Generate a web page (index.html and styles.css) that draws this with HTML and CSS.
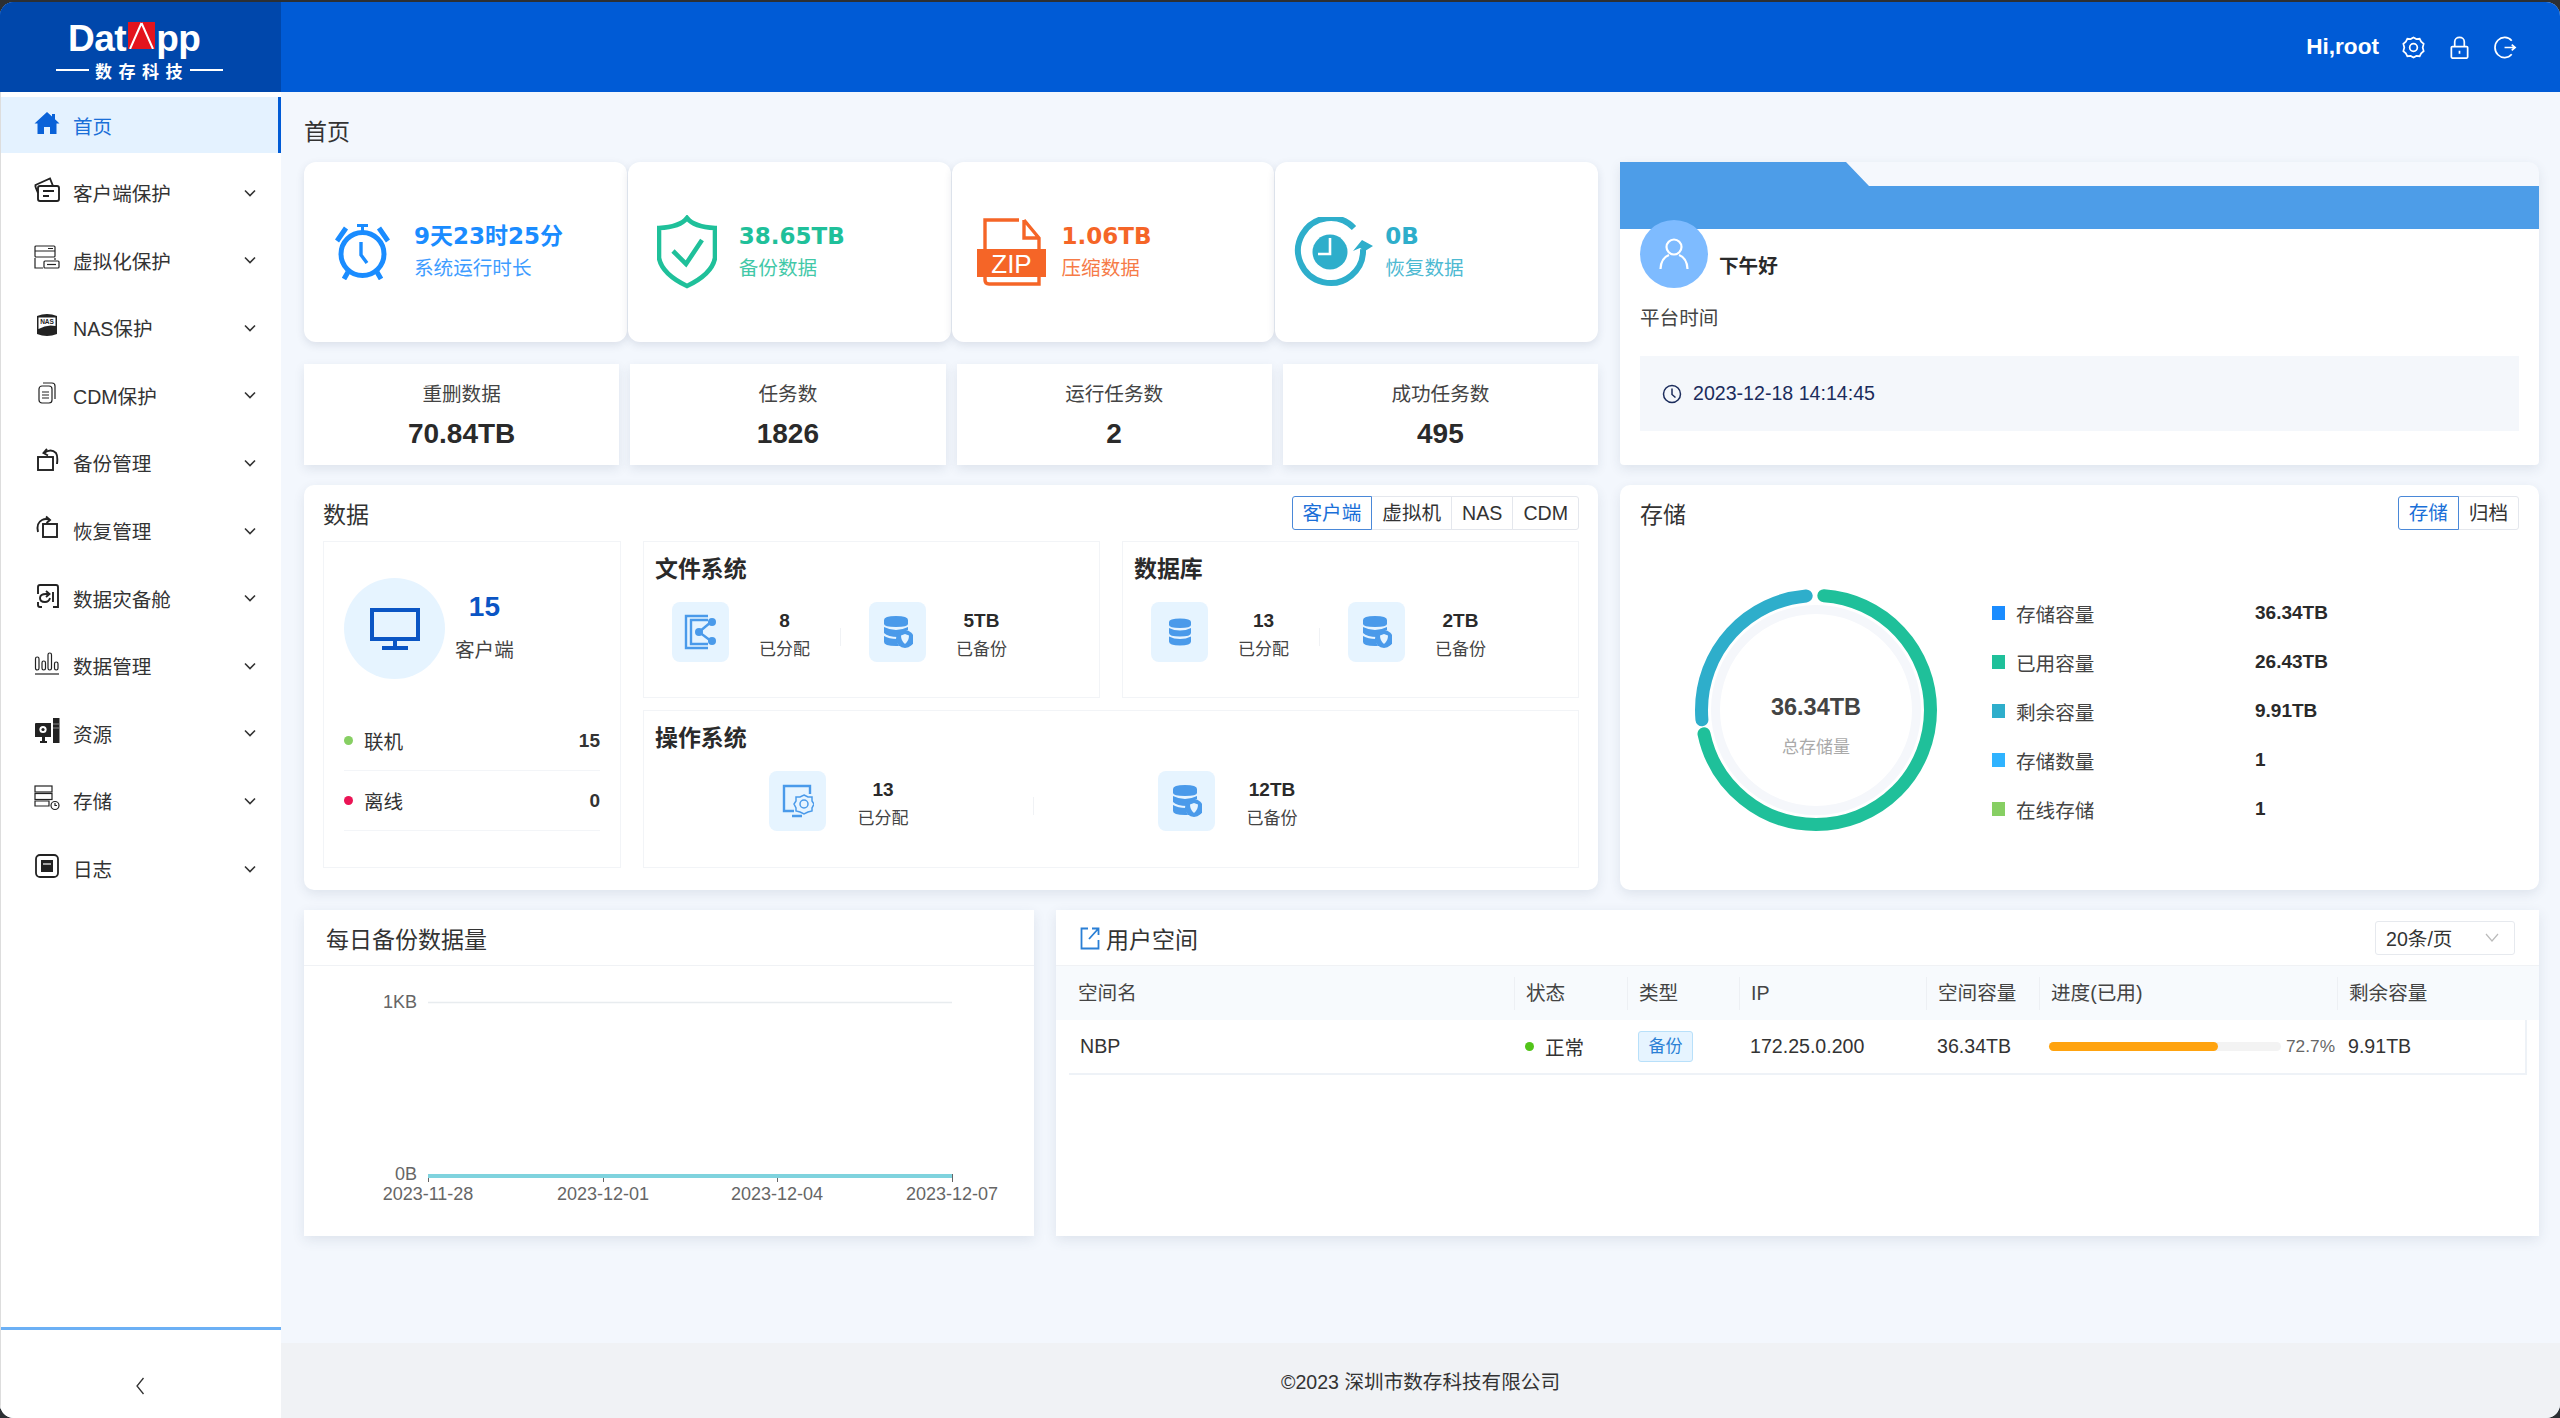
FILE: index.html
```html
<!DOCTYPE html>
<html lang="zh">

<head>
    <meta charset="utf-8">
    <title>DatApp</title>
    <meta name="viewport" content="width=device-width, initial-scale=1.0" />
    <link rel="stylesheet" href="styles.css">
</head>

<body>
    <div class="app">
        <!-- Top bar -->
        <header class="topbar">
            <div class="logo">
                <div class="logo-word">
                    <span>Dat</span>
                    <svg class="logo-a" viewBox="0 0 27 27">
                        <rect width="27" height="27" fill="#e3141d" />
                        <path d="M13.5 1 L2 27 M13.5 1 L25 27" stroke="#fff" stroke-width="2" fill="none" />
                    </svg>
                    <span>pp</span>
                </div>
                <div class="logo-sub"><i></i><span>数存科技</span><i></i></div>
            </div>
            <div class="topbar-right">
                <span class="hi">Hi,root</span>
                <svg class="top-icon" viewBox="0 0 24 24">
                    <path d="M12 1.5 L15 3.2 L18.4 2.9 L20 6 L22.6 8.2 L21.6 12 L22.6 15.8 L20 18 L18.4 21.1 L15 20.8 L12 22.5 L9 20.8 L5.6 21.1 L4 18 L1.4 15.8 L2.4 12 L1.4 8.2 L4 6 L5.6 2.9 L9 3.2 Z" />
                    <circle cx="12" cy="12" r="4" />
                </svg>
                <svg class="top-icon" viewBox="0 0 24 24">
                    <rect x="3.5" y="11" width="17" height="12" rx="1" />
                    <path d="M7 11 V6 a5 4.5 0 0 1 10 0 V11" />
                    <path d="M12 15.5 v3" />
                </svg>
                <svg class="top-icon" viewBox="0 0 24 24">
                    <path d="M18.5 5 A10 10.5 0 1 0 18.5 19" />
                    <path d="M11 12 H22 M18.5 9 L22 12 L18.5 15" />
                </svg>
            </div>
        </header>

        <div class="layout">
            <!-- Sidebar -->
            <aside class="sidebar">
                <nav class="menu">
                    <a class="menu-item active">
                        <svg class="nav-icon" viewBox="0 0 26 26">
                            <path class="blue" d="M13 2 L0.5 13.5 L3.5 13.5 L3.5 24 L10 24 L10 17 L16 17 L16 24 L22.5 24 L22.5 13.5 L25.5 13.5 L21 9.3 L21 4 L18 4 L18 6.6 Z" />
                        </svg>
                        <span>首页</span>
                    </a>
                    <a class="menu-item">
                        <svg class="nav-icon line" viewBox="0 0 26 26">
                            <rect x="4" y="9" width="21" height="15" rx="2" />
                            <path d="M1.5 10 L1.5 8 L16 1.5 L19 9 M4 16 L1.5 10" />
                            <path d="M9 14 H20 M9 19 H15" />
                        </svg>
                        <span>客户端保护</span>
                        <svg class="chev" viewBox="0 0 12 8"><path d="M1 1.5 L6 6.5 L11 1.5" /></svg>
                    </a>
                    <a class="menu-item">
                        <svg class="nav-icon line thin" viewBox="0 0 26 26">
                            <rect x="1" y="1" width="20" height="11" rx="1" />
                            <path d="M1 6 H21 M14 3.5 H19" />
                            <path d="M1 13 V23 H9 M21 13 V15" />
                            <rect x="10" y="16" width="15" height="7" rx="1" />
                            <path d="M13 19.5 H22" />
                        </svg>
                        <span>虚拟化保护</span>
                        <svg class="chev" viewBox="0 0 12 8"><path d="M1 1.5 L6 6.5 L11 1.5" /></svg>
                    </a>
                    <a class="menu-item">
                        <svg class="nav-icon" viewBox="0 0 26 26">
                            <path d="M3 4 Q13 0 23 4 V22 Q13 26 3 22 Z" fill="#222" />
                            <path d="M4.5 5.5 H21.5 V14 Q13 12 4.5 17 Z" fill="#fff" />
                            <text x="13" y="12" class="nas-text">NAS</text>
                        </svg>
                        <span>NAS保护</span>
                        <svg class="chev" viewBox="0 0 12 8"><path d="M1 1.5 L6 6.5 L11 1.5" /></svg>
                    </a>
                    <a class="menu-item">
                        <svg class="nav-icon line thin" viewBox="0 0 26 26">
                            <rect x="5" y="6" width="13" height="17" rx="3" />
                            <path d="M9 3 H18 Q21 3 21 6 V19" />
                            <path d="M8 12 H15 M8 15 H15 M8 18 H15" />
                        </svg>
                        <span>CDM保护</span>
                        <svg class="chev" viewBox="0 0 12 8"><path d="M1 1.5 L6 6.5 L11 1.5" /></svg>
                    </a>
                    <a class="menu-item">
                        <svg class="nav-icon line" viewBox="0 0 26 26">
                            <rect x="4" y="10" width="15" height="13" />
                            <path d="M10 6 Q17 1 22 6 Q24 9 23 17" />
                            <path d="M13 2 L9.5 6 L14 8.5" />
                        </svg>
                        <span>备份管理</span>
                        <svg class="chev" viewBox="0 0 12 8"><path d="M1 1.5 L6 6.5 L11 1.5" /></svg>
                    </a>
                    <a class="menu-item">
                        <svg class="nav-icon line" viewBox="0 0 26 26">
                            <rect x="9" y="9" width="14" height="13" />
                            <path d="M4 17 Q2 8 8 5 Q12 3 16 5" />
                            <path d="M12 1.5 L16 5 L12.5 8" />
                        </svg>
                        <span>恢复管理</span>
                        <svg class="chev" viewBox="0 0 12 8"><path d="M1 1.5 L6 6.5 L11 1.5" /></svg>
                    </a>
                    <a class="menu-item">
                        <svg class="nav-icon line" viewBox="0 0 26 26">
                            <path d="M4 11 V4 Q4 2 6 2 H22 Q24 2 24 4 V24 H19 M4 19 V22 Q4 24 6 24 H8" />
                            <path d="M16 15 Q15 19 11 19 Q6 19 6 15 Q6 11 12 11 H15 M12 8 L15.5 11 L12 14" />
                            <path d="M19 9 V19" />
                        </svg>
                        <span>数据灾备舱</span>
                        <svg class="chev" viewBox="0 0 12 8"><path d="M1 1.5 L6 6.5 L11 1.5" /></svg>
                    </a>
                    <a class="menu-item">
                        <svg class="nav-icon line thin" viewBox="0 0 26 26">
                            <rect x="1.5" y="7" width="3.5" height="13" rx="1.7" />
                            <rect x="8" y="11" width="3.5" height="9" rx="1.7" />
                            <rect x="14" y="3" width="3.5" height="17" rx="1.7" />
                            <rect x="20.5" y="12" width="3.5" height="8" rx="1.7" />
                            <path d="M1 24 H25" />
                        </svg>
                        <span>数据管理</span>
                        <svg class="chev" viewBox="0 0 12 8"><path d="M1 1.5 L6 6.5 L11 1.5" /></svg>
                    </a>
                    <a class="menu-item">
                        <svg class="nav-icon" viewBox="0 0 26 26">
                            <path d="M1 6 Q1 5 2 5 H17 V19 H1 Z M6 23 H13 V25 H6 Z M8 19 H11 V23 H8 Z" fill="#222" />
                            <circle cx="9" cy="11.5" r="3.6" fill="#fff" />
                            <circle cx="9" cy="11.5" r="1.6" fill="#222" />
                            <rect x="19" y="0" width="6.5" height="25" fill="#222" />
                            <path d="M19 6 H25.5 M19 10 H25.5" stroke="#888" stroke-width="1" />
                        </svg>
                        <span>资源</span>
                        <svg class="chev" viewBox="0 0 12 8"><path d="M1 1.5 L6 6.5 L11 1.5" /></svg>
                    </a>
                    <a class="menu-item">
                        <svg class="nav-icon line thin" viewBox="0 0 26 26">
                            <rect x="1" y="1" width="17" height="6" />
                            <rect x="1" y="8.5" width="17" height="6" />
                            <path d="M1 16 H15 V21 H1 Z" />
                            <circle cx="21" cy="20.5" r="4" />
                            <path d="M21 18 V20.5 H23" />
                        </svg>
                        <span>存储</span>
                        <svg class="chev" viewBox="0 0 12 8"><path d="M1 1.5 L6 6.5 L11 1.5" /></svg>
                    </a>
                    <a class="menu-item">
                        <svg class="nav-icon" viewBox="0 0 26 26">
                            <rect x="2" y="2" width="22" height="22" rx="4" fill="none" stroke="#222" stroke-width="1.8" />
                            <rect x="7" y="7" width="12" height="12" fill="#222" />
                            <path d="M9 11 H17" stroke="#fff" stroke-width="1.2" />
                        </svg>
                        <span>日志</span>
                        <svg class="chev" viewBox="0 0 12 8"><path d="M1 1.5 L6 6.5 L11 1.5" /></svg>
                    </a>
                </nav>
                <div class="collapse">
                    <svg viewBox="0 0 10 18"><path d="M8.5 1 L2 9 L8.5 17" /></svg>
                </div>
            </aside>

            <main class="main">
                <div class="content">
                    <h1 class="crumb">首页</h1>

                    <!-- First row -->
                    <div class="row">
                        <div class="top-left">
                            <div class="kpi-grid">
                                <div class="kpi kpi-blue">
                                    <svg class="kpi-icon" width="55" height="56" viewBox="0 0 55 56">
                                        <circle cx="27.5" cy="30" r="21.5" stroke-width="5" />
                                        <path stroke-width="5" d="M2 17 L11 4 M53 17 L44 4 M9 55 L13 48 M46 55 L42 48" />
                                        <path stroke-width="3" d="M27.5 0.5 V8 M22 1.5 H33" />
                                        <path stroke-width="3.4" d="M26 18 V31 L32 39" />
                                    </svg>
                                    <div>
                                        <div class="kpi-value">9天23时25分</div>
                                        <div class="kpi-label">系统运行时长</div>
                                    </div>
                                </div>
                                <div class="kpi kpi-green">
                                    <svg class="kpi-icon" width="60" height="74" viewBox="0 0 60 74">
                                        <path stroke-width="4.6" d="M30 3 Q37 12 58 13 V43 Q55 59 30 71 Q5 59 2 43 V13 Q23 12 30 3 Z" />
                                        <path stroke-width="4.6" d="M16 36 L29 49 L45 25" />
                                    </svg>
                                    <div>
                                        <div class="kpi-value">38.65TB</div>
                                        <div class="kpi-label">备份数据</div>
                                    </div>
                                </div>
                                <div class="kpi kpi-orange">
                                    <svg class="kpi-icon" width="69" height="68" viewBox="0 0 69 68">
                                        <path stroke-width="3.4" d="M8 34 V2 H42 M47 2 L62 20 V34 M47 2 V20 H62 M8 56 V62 Q8 66 12 66 H62 V56" />
                                        <rect x="0" y="31" width="69" height="28" class="zip-band" />
                                        <text x="34.500" y="54.500" class="zip-text">ZIP</text>
                                    </svg>
                                    <div>
                                        <div class="kpi-value">1.06TB</div>
                                        <div class="kpi-label">压缩数据</div>
                                    </div>
                                </div>
                                <div class="kpi kpi-cyan">
                                    <svg class="kpi-icon" width="79" height="71" viewBox="0 0 79 71">
                                        <path stroke-width="6" d="M60 11 A32.500 32.500 0 1 0 69 32" />
                                        <path class="fill" d="M79 29 L68 23 L59 34 L66 31 L71 34 Z" />
                                        <circle class="fill" cx="36" cy="35" r="17.500" />
                                        <path d="M36 21 V37 H24" stroke="#fff" stroke-width="2.600" />
                                    </svg>
                                    <div>
                                        <div class="kpi-value">0B</div>
                                        <div class="kpi-label">恢复数据</div>
                                    </div>
                                </div>
                            </div>
                            <div class="stat-grid">
                                <div class="stat"><div class="stat-label">重删数据</div><div class="stat-value">70.84TB</div></div>
                                <div class="stat"><div class="stat-label">任务数</div><div class="stat-value">1826</div></div>
                                <div class="stat"><div class="stat-label">运行任务数</div><div class="stat-value">2</div></div>
                                <div class="stat"><div class="stat-label">成功任务数</div><div class="stat-value">495</div></div>
                            </div>
                        </div>

                        <div class="card welcome">
                            <div class="banner"></div>
                            <div class="greet">
                                <div class="avatar">
                                    <svg viewBox="0 0 30 34" width="30" height="34">
                                        <circle cx="15" cy="10" r="7.500" />
                                        <path d="M1.500 32 Q2 21 10 18 M28.500 32 Q28 21 20 18" />
                                    </svg>
                                </div>
                                <span class="greet-text">下午好</span>
                            </div>
                            <div class="platform">平台时间</div>
                            <div class="time-box">
                                <svg viewBox="0 0 20 20" width="20" height="20">
                                    <circle cx="10" cy="10" r="8.500" />
                                    <path d="M10 4.500 V10.500 L13.500 13.500" />
                                </svg>
                                <span>2023-12-18 14:14:45</span>
                            </div>
                        </div>
                    </div>

                    <!-- Second row -->
                    <div class="row row-mid">
                        <section class="card data-card">
                            <div class="card-head">
                                <h2>数据</h2>
                                <div class="tabs">
                                    <span class="tab on">客户端</span>
                                    <span class="tab">虚拟机</span>
                                    <span class="tab">NAS</span>
                                    <span class="tab">CDM</span>
                                </div>
                            </div>
                            <div class="data-body">
                                <div class="panel client-panel">
                                    <div class="client-top">
                                        <div class="client-circle">
                                            <svg viewBox="0 0 50 42" width="50" height="42">
                                                <rect x="2" y="2" width="46" height="29" />
                                                <path d="M25 31 V40 M12 40 H38" />
                                            </svg>
                                        </div>
                                        <div class="client-count">
                                            <div class="count-num">15</div>
                                            <div class="count-label">客户端</div>
                                        </div>
                                    </div>
                                    <div class="client-row"><i class="dot dot-on"></i><span>联机</span><b>15</b></div>
                                    <div class="client-row"><i class="dot dot-off"></i><span>离线</span><b>0</b></div>
                                </div>

                                <div class="panel-grid">
                                    <div class="panel">
                                        <h3>文件系统</h3>
                                        <div class="items">
                                            <div class="tile">
                                                <svg class="tile-icon" width="34" height="36" viewBox="0 0 34 36">
                                                    <path class="tl" d="M24 2 H2 V34 H24 M24 6 H7 V30 H24" />
                                                    <path class="tl" d="M27 8 L15 18 L27 27" />
                                                    <circle class="tf" cx="28" cy="8" r="4" />
                                                    <circle class="tf" cx="15" cy="18" r="4" />
                                                    <circle class="tf" cx="28" cy="27" r="4" />
                                                </svg>
                                            </div>
                                            <div class="metric"><b>8</b><span>已分配</span></div>
                                            <i class="split"></i>
                                            <div class="tile">
                                                <svg class="tile-icon" width="30" height="34" viewBox="0 0 30 34">
                                                    <path class="tf" d="M1 5 Q1 1 13 1 Q25 1 25 5 V9 Q25 12 13 12 Q1 12 1 9 Z M1 12 Q7 15 13 15 Q19 15 25 12 V15 Q16 18 15 22 Q5 22 1 18 Z M1 21 Q6 24 14 24 Q14 28 16 31 H13 Q1 31 1 27 Z" />
                                                    <circle class="tf" cx="22" cy="24" r="9" />
                                                    <path d="M22 19 L26 20.500 Q26 26 22 29 Q18 26 18 20.500 Z" fill="#e6f4ff" />
                                                </svg>
                                            </div>
                                            <div class="metric"><b>5TB</b><span>已备份</span></div>
                                        </div>
                                    </div>
                                    <div class="panel">
                                        <h3>数据库</h3>
                                        <div class="items">
                                            <div class="tile">
                                                <svg class="tile-icon" width="24" height="28" viewBox="0 0 24 28">
                                                    <path class="tf" d="M1 4 Q1 0.500 12 0.500 Q23 0.500 23 4 V7 Q23 10 12 10 Q1 10 1 7 Z M1 10 Q6 12.500 12 12.500 Q18 12.500 23 10 V15 Q23 18.500 12 18.500 Q1 18.500 1 15 Z M1 18.500 Q6 21 12 21 Q18 21 23 18.500 V23.500 Q23 27.500 12 27.500 Q1 27.500 1 23.500 Z" />
                                                </svg>
                                            </div>
                                            <div class="metric"><b>13</b><span>已分配</span></div>
                                            <i class="split"></i>
                                            <div class="tile">
                                                <svg class="tile-icon" width="30" height="34" viewBox="0 0 30 34">
                                                    <path class="tf" d="M1 5 Q1 1 13 1 Q25 1 25 5 V9 Q25 12 13 12 Q1 12 1 9 Z M1 12 Q7 15 13 15 Q19 15 25 12 V15 Q16 18 15 22 Q5 22 1 18 Z M1 21 Q6 24 14 24 Q14 28 16 31 H13 Q1 31 1 27 Z" />
                                                    <circle class="tf" cx="22" cy="24" r="9" />
                                                    <path d="M22 19 L26 20.500 Q26 26 22 29 Q18 26 18 20.500 Z" fill="#e6f4ff" />
                                                </svg>
                                            </div>
                                            <div class="metric"><b>2TB</b><span>已备份</span></div>
                                        </div>
                                    </div>
                                    <div class="panel panel-wide">
                                        <h3>操作系统</h3>
                                        <div class="items items-os">
                                            <div class="tile">
                                                <svg class="tile-icon" width="32" height="34" viewBox="0 0 32 34">
                                                    <path class="tl" d="M28 10 V2 H2 V27 H12 M10 32 H20" />
                                                    <path class="tl thin-line" d="M22 11 L26 13 L30 13 L30 17 L32 20 L30 24 L30 27 L26 28 L22 30 L18 28 L14 27 L14 24 L12 20 L14 17 L14 13 L18 13 Z" />
                                                    <circle class="tl thin-line" cx="22" cy="20" r="4" />
                                                </svg>
                                            </div>
                                            <div class="metric"><b>13</b><span>已分配</span></div>
                                            <i class="split"></i>
                                            <div class="tile">
                                                <svg class="tile-icon" width="30" height="34" viewBox="0 0 30 34">
                                                    <path class="tf" d="M1 5 Q1 1 13 1 Q25 1 25 5 V9 Q25 12 13 12 Q1 12 1 9 Z M1 12 Q7 15 13 15 Q19 15 25 12 V15 Q16 18 15 22 Q5 22 1 18 Z M1 21 Q6 24 14 24 Q14 28 16 31 H13 Q1 31 1 27 Z" />
                                                    <circle class="tf" cx="22" cy="24" r="9" />
                                                    <path d="M22 19 L26 20.500 Q26 26 22 29 Q18 26 18 20.500 Z" fill="#e6f4ff" />
                                                </svg>
                                            </div>
                                            <div class="metric"><b>12TB</b><span>已备份</span></div>
                                        </div>
                                    </div>
                                </div>
                            </div>
                        </section>

                        <section class="card storage-card">
                            <div class="card-head">
                                <h2>存储</h2>
                                <div class="tabs">
                                    <span class="tab on">存储</span>
                                    <span class="tab">归档</span>
                                </div>
                            </div>
                            <div class="storage-body">
                                <div class="ring">
                                    <svg viewBox="0 0 242 242" width="242" height="242">
                                        <circle class="ring-bg" cx="121" cy="121" r="100.500" />
                                        <circle class="ring-arc ring-used" cx="121" cy="121" r="114.500" pathLength="360" />
                                        <circle class="ring-arc ring-free" cx="121" cy="121" r="114.500" pathLength="360" />
                                    </svg>
                                    <div class="ring-text">
                                        <div class="ring-value">36.34TB</div>
                                        <div class="ring-label">总存储量</div>
                                    </div>
                                </div>
                                <ul class="legend">
                                    <li><i class="sq sq-blue"></i><span>存储容量</span><b>36.34TB</b></li>
                                    <li><i class="sq sq-green"></i><span>已用容量</span><b>26.43TB</b></li>
                                    <li><i class="sq sq-cyan"></i><span>剩余容量</span><b>9.91TB</b></li>
                                    <li><i class="sq sq-sky"></i><span>存储数量</span><b>1</b></li>
                                    <li><i class="sq sq-lime"></i><span>在线存储</span><b>1</b></li>
                                </ul>
                            </div>
                        </section>
                    </div>

                    <!-- Third row -->
                    <div class="row row-bottom">
                        <section class="card flat">
                            <div class="flat-head"><h2>每日备份数据量</h2></div>
                            <svg class="chart" viewBox="0 0 730 270" width="730" height="270">
                                <path class="grid-line" d="M124 36.500 H648" />
                                <text class="axis-y" x="113" y="42">1KB</text>
                                <text class="axis-y" x="113" y="214">0B</text>
                                <path class="tick" d="M124.500 208 V216 M299.500 210 V216 M473.500 210 V216 M648.500 208 V216" />
                                <path class="series" d="M124 210 H648" />
                                <text class="axis-x" x="124" y="234">2023-11-28</text>
                                <text class="axis-x" x="299" y="234">2023-12-01</text>
                                <text class="axis-x" x="473" y="234">2023-12-04</text>
                                <text class="axis-x" x="648" y="234">2023-12-07</text>
                            </svg>
                        </section>

                        <section class="card flat">
                            <div class="flat-head space-head">
                                <svg class="space-icon" viewBox="0 0 20 24" width="20" height="24">
                                    <path d="M8 2.500 H1.500 V22.500 H18.500 V14" />
                                    <path d="M9 13 L18 3 M12 2.500 H18.500 V9" />
                                </svg>
                                <h2>用户空间</h2>
                                <div class="select">
                                    <span>20条/页</span>
                                    <svg viewBox="0 0 14 9" width="14" height="9"><path d="M1 1 L7 8 L13 1" /></svg>
                                </div>
                            </div>
                            <div class="table-wrap">
                                <table class="space-table">
                                    <colgroup>
                                        <col class="c1"><col class="c2"><col class="c3"><col class="c4"><col class="c5"><col class="c6"><col class="c7">
                                    </colgroup>
                                    <thead>
                                        <tr>
                                            <th><div class="no-line">空间名</div></th>
                                            <th><div>状态</div></th>
                                            <th><div>类型</div></th>
                                            <th><div>IP</div></th>
                                            <th><div>空间容量</div></th>
                                            <th><div>进度(已用)</div></th>
                                            <th><div>剩余容量</div></th>
                                        </tr>
                                    </thead>
                                    <tbody>
                                        <tr>
                                            <td>NBP</td>
                                            <td><span class="state"><i></i>正常</span></td>
                                            <td><span class="tag">备份</span></td>
                                            <td>172.25.0.200</td>
                                            <td>36.34TB</td>
                                            <td>
                                                <div class="progress">
                                                    <div class="track"><div class="fill-bar" style="width:72.7%"></div></div>
                                                    <span>72.7%</span>
                                                </div>
                                            </td>
                                            <td>9.91TB</td>
                                        </tr>
                                    </tbody>
                                </table>
                            </div>
                        </section>
                    </div>
                </div>
                <footer class="footer">©2023 深圳市数存科技有限公司</footer>
            </main>
        </div>
    </div>
</body>

</html>
```

FILE: styles.css
```css
* {
    box-sizing: border-box;
}

html,
body {
    margin: 0;
    height: 100%;
}

body {
    padding-top: 2px;
    background: #2c2f33;
    font-family: "Liberation Sans", "Noto Sans CJK SC", sans-serif;
    font-size: 19.6px;
    color: #333;
    overflow: hidden;
}

h1,
h2,
h3,
ul {
    margin: 0;
    padding: 0;
    font-weight: normal;
}

.app {
    height: 1416px;
    display: flex;
    flex-direction: column;
    border-radius: 14px;
    overflow: hidden;
    background: #f3f7fd;
}

/* top bar */
.topbar {
    height: 90px;
    flex: none;
    display: flex;
    background: #005bd6;
}

.logo {
    width: 281px;
    background: #0047ab;
    padding-top: 20px;
    color: #fff;
}

.logo-word {
    display: flex;
    align-items: flex-start;
    padding-left: 68px;
    height: 34px;
    font-size: 37px;
    line-height: 34px;
    font-weight: bold;
    letter-spacing: -0.5px;
}

.logo-a {
    width: 27px;
    height: 27px;
    margin: 0 1px 0 2px;
}

.logo-sub {
    display: flex;
    align-items: center;
    justify-content: center;
    margin-top: 2px;
    padding-right: 2px;
    height: 24px;
    font-size: 17px;
    font-weight: bold;
}

.logo-sub span {
    letter-spacing: 6.5px;
    margin: 0 1px 0 6px;
}

.logo-sub i {
    width: 33px;
    height: 2px;
    background: #fff;
}

.topbar-right {
    margin-left: auto;
    display: flex;
    align-items: center;
    padding: 0 43px 0 0;
    color: #fff;
}

.hi {
    font-size: 22.6px;
    font-weight: bold;
    margin-right: 23px;
}

.top-icon {
    width: 23px;
    height: 23px;
    margin-right: 23px;
    fill: none;
    stroke: #fff;
    stroke-width: 1.8;
}

.top-icon:last-child {
    margin-right: 0;
}

/* sidebar */
.layout {
    flex: 1;
    display: flex;
    min-height: 0;
}

.sidebar {
    width: 281px;
    flex: none;
    display: flex;
    flex-direction: column;
    padding-top: 5px;
    background: #fff;
    border-left: 1px solid #ddd;
}

.menu-item {
    display: flex;
    align-items: center;
    height: 56px;
    margin-bottom: 11.6px;
    padding: 0 25px 0 33px;
}

.menu-item span {
    margin-left: 13px;
}

.menu-item.active {
    background: #e4f2ff;
    border-right: 3px solid #005bd6;
    color: #1a6fd8;
}

.nav-icon {
    width: 26px;
    height: 26px;
    flex: none;
    margin-top: -5px;
}

.nav-icon .blue {
    fill: #0a62d8;
}

.nav-icon.line {
    fill: none;
    stroke: #222;
    stroke-width: 1.9;
}

.nav-icon.thin {
    stroke-width: 1.2;
}

.nas-text {
    font-size: 6.5px;
    font-weight: bold;
    text-anchor: middle;
    fill: #222;
}

.chev {
    width: 12px;
    height: 8px;
    margin-left: auto;
    fill: none;
    stroke: #333;
    stroke-width: 1.6;
}

.collapse {
    margin-top: auto;
    height: 91px;
    border-top: 3px solid #6cb0f5;
    display: flex;
    align-items: center;
    justify-content: center;
    padding: 24px 2px 0 0;
}

.collapse svg {
    width: 10px;
    height: 18px;
    fill: none;
    stroke: #333;
    stroke-width: 1.3;
}

/* main area */
.main {
    flex: 1;
    min-width: 0;
    display: flex;
    flex-direction: column;
}

.content {
    flex: 1;
    padding: 0 21px 0 23px;
}

.crumb {
    font-size: 23px;
    line-height: 30px;
    padding-top: 25px;
    margin-bottom: 15px;
}

.footer {
    height: 75px;
    flex: none;
    display: flex;
    align-items: center;
    justify-content: center;
    background: #f0f2f5;
}

.row {
    display: grid;
    grid-template-columns: 1294px 919px;
    gap: 22px;
    margin-bottom: 20px;
}

.row-mid {
    height: 405px;
}

.row-bottom {
    grid-template-columns: 730px 1483px;
    height: 326px;
}

.card {
    background: #fff;
    border-radius: 10px;
    box-shadow: 0 4px 12px rgba(40, 60, 90, .1);
}

/* kpi cards */
.top-left {
    display: flex;
    flex-direction: column;
    gap: 22px;
}

.kpi-grid {
    height: 180px;
    display: grid;
    grid-template-columns: repeat(4, 1fr);
    gap: 1px;
}

.kpi {
    display: flex;
    align-items: center;
    background: #fff;
    border-radius: 12px;
    box-shadow: 0 3px 8px rgba(40, 60, 90, .12);
}

.kpi-icon {
    flex: none;
    fill: none;
    stroke: currentColor;
}

.kpi-icon .fill {
    fill: currentColor;
    stroke: none;
}

.kpi-value {
    font-family: "DejaVu Sans", "Noto Sans CJK SC", sans-serif;
    font-size: 23px;
    line-height: 32px;
    font-weight: bold;
}

.kpi-label {
    line-height: 32px;
    opacity: .85;
}

.kpi-blue {
    color: #1a8cff;
    padding-left: 31px;
    gap: 24px;
}

.kpi-green {
    color: #1fc09a;
    padding-left: 29px;
    gap: 22px;
}

.kpi-orange {
    color: #f56527;
    padding-left: 25px;
    gap: 16px;
}

.kpi-cyan {
    color: #2eaecb;
    padding-left: 19px;
    gap: 12px;
}

.zip-band {
    fill: #f56527;
    stroke: none;
}

.zip-text {
    font-size: 26px;
    text-anchor: middle;
    fill: #fff;
    stroke: none;
}

.stat-grid {
    height: 101px;
    display: grid;
    grid-template-columns: repeat(4, 1fr);
    gap: 11px;
}

.stat {
    background: #fff;
    text-align: center;
    padding-top: 16px;
    box-shadow: 0 4px 10px rgba(40, 60, 90, .1);
}

.stat-label {
    line-height: 28px;
    color: #444;
}

.stat-value {
    margin-top: 8px;
    font-size: 28px;
    line-height: 36px;
    font-weight: bold;
    color: #2a2a2a;
}

/* welcome card */
.welcome {
    background: #fff;
    border-radius: 0 10px 4px 4px;
}

.banner {
    height: 67px;
    background: #4d9de8;
    clip-path: polygon(0 0, 226px 0, 249px 24px, 100% 24px, 100% 100%, 0 100%);
}

.welcome {
    background-image: linear-gradient(#f5f8fd 24px, #fff 24px);
}

.greet {
    position: relative;
    display: flex;
    align-items: center;
    gap: 11px;
    margin-top: -9px;
    padding: 0 20px;
}

.avatar {
    width: 68px;
    height: 68px;
    border-radius: 50%;
    background: #7ebbff;
    display: flex;
    align-items: center;
    justify-content: center;
}

.avatar svg {
    fill: none;
    stroke: #fff;
    stroke-width: 2.2;
}

.greet-text {
    margin-top: 20px;
    font-weight: bold;
    color: #2a2a2a;
}

.platform {
    margin-top: 17px;
    padding-left: 20px;
    line-height: 26px;
    color: #444;
}

.time-box {
    margin: 25px 20px 0;
    height: 75px;
    display: flex;
    align-items: center;
    gap: 11px;
    padding-left: 22px;
    background: #f4f7fb;
    color: #1b2c5c;
}

.time-box svg {
    fill: none;
    stroke: #1b2c5c;
    stroke-width: 1.5;
}

/* data card */
.card-head {
    display: flex;
    align-items: center;
    justify-content: space-between;
    height: 45px;
    padding: 11px 19px 0;
}

.card-head h2,
.flat-head h2 {
    font-size: 23px;
}

.tabs {
    display: flex;
}

.tab {
    height: 34px;
    line-height: 32px;
    padding: 0 10px;
    margin-left: -1px;
    border: 1px solid #e4e7ed;
    background: #fff;
}

.tab:first-child {
    border-radius: 3px 0 0 3px;
}

.tab:last-child {
    border-radius: 0 3px 3px 0;
}

.tab.on {
    position: relative;
    border-color: #4a88d8;
    color: #1a6fd8;
}

.data-body {
    display: grid;
    grid-template-columns: 298px 936px;
    gap: 22px;
    margin: 11px 18px 0 19px;
}

.panel {
    border: 1px solid #f2f4f7;
}

.client-panel {
    height: 327px;
    padding: 36px 20px 0;
}

.client-top {
    display: flex;
}

.client-circle {
    width: 101px;
    height: 101px;
    border-radius: 50%;
    background: #e6f4ff;
    display: flex;
    align-items: center;
    justify-content: center;
}

.client-circle svg {
    fill: none;
    stroke: #0a55c4;
    stroke-width: 4;
}

.client-count {
    margin: 12px 0 0 10px;
    text-align: center;
}

.count-num {
    font-size: 28px;
    line-height: 34px;
    font-weight: bold;
    color: #0a55c4;
}

.count-label {
    margin-top: 13px;
    line-height: 26px;
    color: #444;
}

.client-row {
    display: flex;
    align-items: center;
    height: 60px;
    border-bottom: 1px solid #f3f5f8;
}

.client-row:nth-child(2) {
    margin-top: 32px;
}

.client-row b {
    margin-left: auto;
    font-size: 19px;
}

.dot {
    width: 9px;
    height: 9px;
    border-radius: 50%;
    margin-right: 11px;
}

.dot-on {
    background: #87cf63;
}

.dot-off {
    background: #eb1455;
}

.panel-grid {
    display: grid;
    grid-template-columns: 457px 457px;
    grid-template-rows: 157px 158px;
    gap: 12px 22px;
}

.panel-wide {
    grid-column: 1 / 3;
}

.panel h3 {
    padding: 14px 0 0 11px;
    line-height: 26px;
    font-weight: bold;
    color: #2a2a2a;
}

.items {
    display: flex;
    align-items: flex-start;
    margin-top: 20px;
    padding-left: 28px;
}

.tile {
    width: 57px;
    height: 60px;
    flex: none;
    border-radius: 8px;
    background: #e6f4ff;
    display: flex;
    align-items: center;
    justify-content: center;
}

.tile-icon .tf {
    fill: #4a9aea;
}

.tile-icon .tl {
    fill: none;
    stroke: #4a9aea;
    stroke-width: 2.4;
}

.tile-icon .thin-line {
    stroke-width: 1.5;
}

.metric {
    width: 111px;
    flex: none;
    padding-top: 6px;
    display: flex;
    flex-direction: column;
    align-items: center;
}

.metric b {
    font-size: 19px;
    line-height: 26px;
    color: #2a2a2a;
}

.metric span {
    margin-top: 3px;
    font-size: 17px;
    line-height: 26px;
    color: #444;
}

.split {
    width: 1px;
    height: 18px;
    margin: 26px 28px 0 0;
    background: #f0f2f5;
}

.items-os {
    padding-left: 125px;
}

.items-os .metric {
    width: 114px;
}

.items-os .split {
    margin: 26px 124px 0 93px;
}

/* storage card */
.storage-card .card-head {
    padding: 11px 20px 0;
}

.storage-body {
    display: flex;
    align-items: flex-start;
    padding: 59px 0 0 75px;
}

.ring {
    display: grid;
    place-items: center;
    width: 242px;
    height: 242px;
}

.ring>* {
    grid-area: 1 / 1;
}

.ring-bg {
    fill: none;
    stroke: #f5f7fb;
    stroke-width: 9;
}

.ring-arc {
    fill: none;
    stroke-width: 13;
    stroke-linecap: round;
    transform: rotate(-90deg);
    transform-origin: 121px 121px;
}

.ring-used {
    stroke: #1fc09a;
    stroke-dasharray: 254 106;
    stroke-dashoffset: -4;
}

.ring-free {
    stroke: #2eaecb;
    stroke-dasharray: 90 270;
    stroke-dashoffset: -265;
}

.ring-text {
    padding-top: 31px;
    text-align: center;
}

.ring-value {
    font-size: 23.5px;
    line-height: 30px;
    font-weight: bold;
    color: #444;
}

.ring-label {
    margin-top: 15px;
    font-size: 17px;
    line-height: 22px;
    color: #aaa;
}

.legend {
    list-style: none;
    margin: -0.5px 0 0 55px;
}

.legend li {
    display: flex;
    align-items: center;
    height: 49px;
}

.legend span {
    width: 239px;
    margin-left: 11px;
    color: #444;
}

.legend b {
    font-size: 19px;
    color: #2a2a2a;
}

.sq {
    width: 13px;
    height: 14px;
}

.sq-blue {
    background: #1a8cff;
}

.sq-green {
    background: #1fc09a;
}

.sq-cyan {
    background: #2eaecb;
}

.sq-sky {
    background: #2fb3ff;
}

.sq-lime {
    background: #87cf63;
}

/* bottom cards */
.flat {
    border-radius: 0;
}

.flat-head {
    display: flex;
    align-items: center;
    height: 56px;
    padding: 0 22px;
    border-bottom: 1px solid #f0f2f5;
}

.chart {
    display: block;
}

.grid-line {
    stroke: #e8ecef;
    stroke-width: 1.5;
}

.tick {
    stroke: #666;
    stroke-width: 1;
}

.series {
    stroke: #7fd3de;
    stroke-width: 4;
}

.axis-y,
.axis-x {
    font-size: 18px;
    fill: #666;
}

.axis-y {
    text-anchor: end;
}

.axis-x {
    text-anchor: middle;
}

.space-head {
    padding: 0 24px 0 24px;
}

.space-icon {
    margin-right: 6px;
    fill: none;
    stroke: #2a7fd5;
    stroke-width: 1.8;
}

.select {
    margin-left: auto;
    width: 140px;
    height: 34px;
    display: flex;
    align-items: center;
    justify-content: space-between;
    padding: 0 15px 0 10px;
    border: 1px solid #e6e9ee;
    border-radius: 3px;
}

.select svg {
    fill: none;
    stroke: #bbb;
    stroke-width: 1.2;
}

.table-wrap {
    padding: 0 12px 0 13px;
    background: linear-gradient(#f7fafd 54px, transparent 54px);
}

.space-table {
    width: 1457px;
    table-layout: fixed;
    border-collapse: collapse;
}

.c1 {
    width: 445px;
}

.c2 {
    width: 113px;
}

.c3 {
    width: 112px;
}

.c4 {
    width: 187px;
}

.c5 {
    width: 113px;
}

.c6 {
    width: 298px;
}

.c7 {
    width: 189px;
}

.space-table th {
    height: 54px;
    padding: 0;
    font-weight: normal;
    text-align: left;
    color: #444;
}

.space-table th div {
    height: 33px;
    line-height: 33px;
    padding-left: 11px;
    border-left: 1px solid #edf0f4;
}

.space-table th div.no-line {
    border-left: 0;
    padding-left: 9px;
}

.space-table td {
    height: 54px;
    padding: 0 0 0 11px;
    border-bottom: 2px solid #eef2f7;
}

.space-table td:last-child {
    border-right: 2px solid #eef2f7;
}

.state {
    display: flex;
    align-items: center;
}

.state i {
    width: 9px;
    height: 9px;
    margin-right: 11px;
    border-radius: 50%;
    background: #52c41a;
}

.tag {
    display: inline-block;
    width: 55px;
    height: 31px;
    line-height: 29px;
    text-align: center;
    font-size: 17px;
    background: #e6f4ff;
    border: 1px solid #b8e0fa;
    border-radius: 3px;
    color: #2a7fd5;
}

.progress {
    display: flex;
    align-items: center;
    gap: 5px;
    margin-left: -1px;
}

.progress span {
    font-size: 17.300px;
    color: #666;
}

.track {
    width: 232px;
    height: 9px;
    border-radius: 5px;
    background: #f3f3f3;
}

.fill-bar {
    height: 9px;
    border-radius: 5px;
    background: #ffa30f;
}
```
